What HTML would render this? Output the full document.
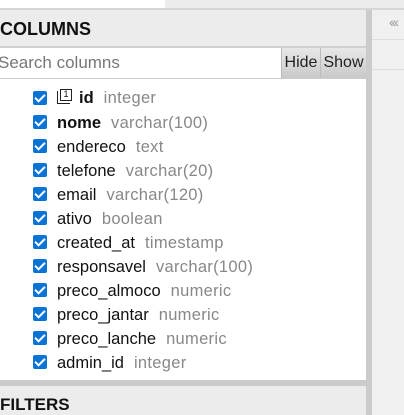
<!DOCTYPE html><html><head><style>
body{margin:0;width:404px;height:415px;overflow:hidden;background:#ececec;font-family:"Liberation Sans",sans-serif;position:relative}
div{position:absolute;box-sizing:border-box}
.cb{width:14px;height:14px;background:#0a74d6;border-radius:2px;left:33px}
.cb:after{content:"";position:absolute;left:4px;top:1px;width:4px;height:8px;border:solid #fff;border-width:0 2px 2px 0;transform:rotate(45deg)}
.r{left:57px;font-size:16.5px;color:#111;white-space:nowrap}
.t{color:#888;margin-left:10px;letter-spacing:0.3px}
.btn{top:48px;height:30px;background:linear-gradient(#e8e8e8,#c9c9c9);font-size:16px;color:#222;text-align:center;line-height:30px;border-left:1px solid #bbb}
</style></head><body>
<div style="left:0;top:0;width:165px;height:8px;background:#fff"></div>
<div style="left:0;top:8px;width:404px;height:2px;background:#d6d6d6"></div>
<div style="left:0;top:10px;width:366px;height:370px;background:#ececec"></div>
<div style="left:366px;top:10px;width:6px;height:405px;background:#cbcbcb"></div>
<div style="left:372px;top:10px;width:32px;height:405px;background:#f0f0f0"></div>
<div style="left:372px;top:39px;width:32px;height:1px;background:#ddd"></div>
<div style="left:372px;top:69px;width:32px;height:1px;background:#ddd"></div>
<div style="left:389px;top:14px;font-size:14px;color:#999;letter-spacing:-2px">‹‹‹</div>
<div style="left:0;top:19px;font-size:18px;font-weight:bold;color:#111">COLUMNS</div>
<div style="left:0;top:46px;width:366px;height:2px;background:#d0d0d0"></div>
<div style="left:0;top:48px;width:366px;height:332px;background:#fff"></div>
<div style="left:-2px;top:53px;font-size:17px;color:#777">Search columns</div>
<div class="btn" style="left:281px;width:39px">Hide</div>
<div class="btn" style="left:320px;width:46px">Show</div>
<div style="left:0;top:78px;width:366px;height:1px;background:#ccc"></div>
<div style="left:0;top:380px;width:366px;height:6px;background:#cbcbcb"></div>
<div style="left:0;top:386px;width:366px;height:29px;background:#ececec"></div>
<div style="left:0;top:395px;font-size:17px;font-weight:bold;color:#111">FILTERS</div>

<div style="left:57px;top:91px;width:13px;height:13px;border-left:1.5px solid #222;border-bottom:1.5px solid #222"></div>
<div style="left:60px;top:89px;width:12px;height:12px;border:1.5px solid #222;background:#fff;font-size:9px;line-height:9px;text-align:center;color:#111">1</div>
<div class="cb" style="top:91px"></div><div class="r" style="top:89px;left:79px"><b>id</b><span class="t">integer</span></div>
<div class="cb" style="top:115px"></div><div class="r" style="top:114px"><b>nome</b><span class="t">varchar(100)</span></div>
<div class="cb" style="top:139px"></div><div class="r" style="top:138px">endereco<span class="t">text</span></div>
<div class="cb" style="top:163px"></div><div class="r" style="top:162px">telefone<span class="t">varchar(20)</span></div>
<div class="cb" style="top:187px"></div><div class="r" style="top:186px">email<span class="t">varchar(120)</span></div>
<div class="cb" style="top:211px"></div><div class="r" style="top:210px">ativo<span class="t">boolean</span></div>
<div class="cb" style="top:235px"></div><div class="r" style="top:234px">created_at<span class="t">timestamp</span></div>
<div class="cb" style="top:259px"></div><div class="r" style="top:258px">responsavel<span class="t">varchar(100)</span></div>
<div class="cb" style="top:283px"></div><div class="r" style="top:282px">preco_almoco<span class="t">numeric</span></div>
<div class="cb" style="top:307px"></div><div class="r" style="top:306px">preco_jantar<span class="t">numeric</span></div>
<div class="cb" style="top:331px"></div><div class="r" style="top:330px">preco_lanche<span class="t">numeric</span></div>
<div class="cb" style="top:355px"></div><div class="r" style="top:354px">admin_id<span class="t">integer</span></div>
</body></html>
